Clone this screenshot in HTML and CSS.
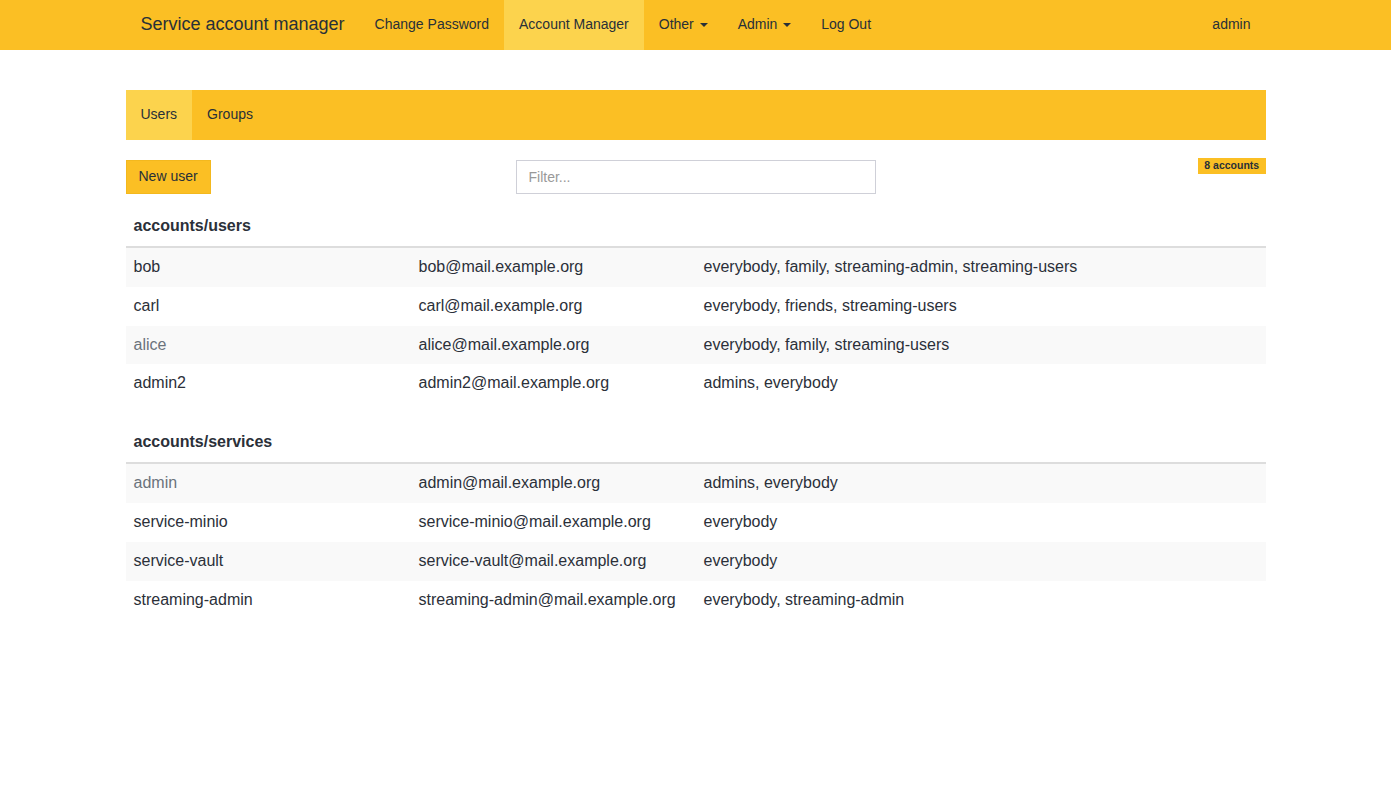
FILE: index.html
```html
<!DOCTYPE html>
<html>
<head>
<meta charset="utf-8">
<title>Service account manager</title>
<link rel="stylesheet" href="styles.css">
</head>
<body>
<nav class="navbar">
  <div class="container nav-inner">
    <a class="brand" href="#">Service account manager</a>
    <ul class="nav">
      <li><a href="#">Change Password</a></li>
      <li class="active"><a href="#">Account Manager</a></li>
      <li><a href="#">Other <span class="caret"></span></a></li>
      <li><a href="#">Admin <span class="caret"></span></a></li>
      <li><a href="#">Log Out</a></li>
    </ul>
    <ul class="nav nav-right">
      <li><a href="#">admin</a></li>
    </ul>
  </div>
</nav>

<main class="container page">
  <ul class="tabs">
    <li class="active"><a href="#">Users</a></li>
    <li><a href="#">Groups</a></li>
  </ul>

  <div class="controls">
    <div class="ctl-left"><button class="btn">New user</button></div>
    <div class="ctl-mid"><input class="filter" type="text" placeholder="Filter..."></div>
    <div class="ctl-right"><span class="label">8 accounts</span></div>
  </div>

  <table class="table">
    <colgroup><col class="c-name"><col class="c-mail"><col class="c-groups"></colgroup>
    <thead><tr><th colspan="3">accounts/users</th></tr></thead>
    <tbody>
      <tr><td>bob</td><td>bob@mail.example.org</td><td>everybody, family, streaming-admin, streaming-users</td></tr>
      <tr><td>carl</td><td>carl@mail.example.org</td><td>everybody, friends, streaming-users</td></tr>
      <tr><td class="muted">alice</td><td>alice@mail.example.org</td><td>everybody, family, streaming-users</td></tr>
      <tr><td>admin2</td><td>admin2@mail.example.org</td><td>admins, everybody</td></tr>
    </tbody>
  </table>

  <table class="table">
    <colgroup><col class="c-name"><col class="c-mail"><col class="c-groups"></colgroup>
    <thead><tr><th colspan="3">accounts/services</th></tr></thead>
    <tbody>
      <tr><td class="muted">admin</td><td>admin@mail.example.org</td><td>admins, everybody</td></tr>
      <tr><td>service-minio</td><td>service-minio@mail.example.org</td><td>everybody</td></tr>
      <tr><td>service-vault</td><td>service-vault@mail.example.org</td><td>everybody</td></tr>
      <tr><td>streaming-admin</td><td>streaming-admin@mail.example.org</td><td>everybody, streaming-admin</td></tr>
    </tbody>
  </table>
</main>
</body>
</html>
```

FILE: styles.css
```css
* { box-sizing: border-box; }
html, body { margin: 0; padding: 0; }
body {
  font-family: "Liberation Sans", Arial, Helvetica, sans-serif;
  font-size: 14px;
  line-height: 1.42857;
  color: #2b3039;
  background: #fff;
}
a { text-decoration: none; color: inherit; }
ul { list-style: none; margin: 0; padding: 0; }

.container {
  width: 1170px;
  margin: 0 auto;
  padding: 0 15px;
}

.navbar {
  background: #fbbf24;
  height: 50px;
  margin-bottom: 40px;
}
.nav-inner {
  display: flex;
  align-items: stretch;
  height: 50px;
}
.brand {
  display: block;
  padding: 13px 15px 15px;
  font-size: 18px;
  line-height: 22px;
  color: #283038;
}
.nav { display: flex; }
.nav li a {
  display: block;
  padding: 14px 15px 16px;
  line-height: 20px;
  color: #283038;
}
.nav li.active a { background: #fcd34d; }
.nav-right { margin-left: auto; }
.caret {
  display: inline-block;
  width: 0; height: 0;
  margin-left: 2px;
  vertical-align: middle;
  border-top: 4px solid;
  border-left: 4px solid transparent;
  border-right: 4px solid transparent;
}

.tabs {
  display: flex;
  background: #fbbf24;
  height: 50px;
  margin-bottom: 20px;
}
.tabs li a {
  display: block;
  padding: 14px 15px 16px;
  line-height: 20px;
  color: #283038;
}
.tabs li.active a { background: #fcd34d; }

.controls {
  display: grid;
  grid-template-columns: 1fr 360px 1fr;
  align-items: start;
  margin-bottom: 13px;
}
.btn {
  font-family: inherit;
  font-size: 14px;
  line-height: 20px;
  padding: 5px 12px 7px;
  background: #fbbf24;
  border: 1px solid #f3b81e;
  border-radius: 0;
  color: #283038;
  cursor: pointer;
}
.filter {
  display: block;
  width: 360px;
  height: 34px;
  padding: 6px 12px;
  font-family: inherit;
  font-size: 14px;
  border: 1px solid #cfd0d8;
  border-radius: 0;
  color: #555;
}
.filter::placeholder { color: #999; }
.ctl-right { display: flex; justify-content: flex-end; margin-top: -2px; }
.label {
  display: inline-block;
  background: #fbbf24;
  font-size: 10.5px;
  font-weight: bold;
  line-height: 1;
  padding: 0.15em 0.6em 0.35em;
  color: #283038;
}

.table {
  width: 100%;
  border-collapse: collapse;
  border-spacing: 0;
  margin-bottom: 20px;
  font-size: 16px;
  table-layout: fixed;
}
.c-name, .c-mail { width: 25%; }
.c-groups { width: 50%; }
.table th {
  text-align: left;
  font-weight: bold;
  padding: 8px;
  line-height: 1.42857;
  border-bottom: 2px solid #ddd;
}
.table td {
  padding: 8px;
  line-height: 1.42857;
}
.table tbody tr:nth-child(odd) { background: #f9f9f9; }
.muted { color: #6b737c; }
```
